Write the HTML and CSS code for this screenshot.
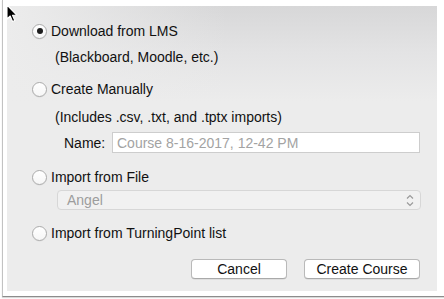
FILE: index.html
```html
<!DOCTYPE html>
<html>
<head>
<meta charset="utf-8">
<link rel="stylesheet" href="styles.css">
</head>
<body>
<div class="frame">
  <div class="panel">
    <div class="row">
      <span class="radio checked"></span>
      <span class="label">Download from LMS</span>
    </div>
    <div class="desc desc1">(Blackboard, Moodle, etc.)</div>
    <div class="row row2">
      <span class="radio"></span>
      <span class="label">Create Manually</span>
    </div>
    <div class="desc desc2">(Includes .csv, .txt, and .tptx imports)</div>
    <div class="name-row">
      <span class="name-label">Name:</span>
      <input class="name-input" type="text" placeholder="Course 8-16-2017, 12-42 PM">
    </div>
    <div class="row row3">
      <span class="radio"></span>
      <span class="label">Import from File</span>
    </div>
    <div class="select">
      <span class="select-text">Angel</span>
      <svg class="select-arrows" width="8" height="13" viewBox="0 0 8 13">
        <path d="M1 4.5 L4 1.5 L7 4.5" fill="none" stroke="#9a9a9a" stroke-width="1.2"/>
        <path d="M1 8.5 L4 11.5 L7 8.5" fill="none" stroke="#9a9a9a" stroke-width="1.2"/>
      </svg>
    </div>
    <div class="row row4">
      <span class="radio"></span>
      <span class="label">Import from TurningPoint list</span>
    </div>
    <div class="buttons">
      <button class="btn btn-cancel">Cancel</button>
      <button class="btn btn-create">Create Course</button>
    </div>
  </div>
</div>
<svg class="cursor" width="12" height="19" viewBox="0 0 12 19">
  <path d="M1 1 L1 15 L4.2 12 L6.6 17.6 L8.8 16.6 L6.5 11.2 L10.8 11.2 Z" fill="#000" stroke="#fff" stroke-width="1.1" stroke-linejoin="round"/>
</svg>
</body>
</html>
```
FILE: styles.css
```css
html, body {
  margin: 0;
  padding: 0;
  background: #ffffff;
}
body {
  width: 444px;
  height: 299px;
  overflow: hidden;
  position: relative;
  font-family: "Liberation Sans", Arial, sans-serif;
  font-size: 14px;
  color: #111;
}
.frame {
  margin-left: 2px;
  width: 438px;
  padding: 6px 4px 5px 4px;
  border-left: 1px solid #c2c2c2;
  border-right: 1px solid #b8b8b8;
  border-bottom: 1px solid #8c8c8c;
  background: #fff;
  box-shadow: 0 1px 1px rgba(0,0,0,0.15);
}
.panel {
  width: 430px;
  height: 285px;
  box-sizing: border-box;
  padding: 15px 17px 0 26px;
  background:
    linear-gradient(to right, #ececec 0, rgba(236,236,236,0) 220px),
    linear-gradient(to bottom, #d7d7d8 0, #e3e3e4 45px, #ececec 95px);
  display: flex;
  flex-direction: column;
}
.row {
  height: 20px;
  display: flex;
  align-items: center;
}
.row2 { margin-top: 12px; }
.row3 { margin-top: 14px; }
.row4 { margin-top: 13px; }
.radio {
  width: 15px;
  height: 15px;
  box-sizing: border-box;
  border-radius: 50%;
  border: 1px solid #ababab;
  background: linear-gradient(to bottom, #ffffff, #f6f6f6);
  box-shadow: 0 0.5px 0.5px rgba(0,0,0,0.08);
  margin-left: -1px;
  margin-right: 4px;
  display: flex;
  align-items: center;
  justify-content: center;
  flex: none;
}
.radio.checked::after {
  content: "";
  width: 6px;
  height: 6px;
  border-radius: 50%;
  background: #1e1e1e;
}
.label {
  line-height: 20px;
  color: #111;
}
.desc {
  height: 20px;
  line-height: 20px;
  padding-left: 22px;
  color: #111;
}
.desc1 { margin-top: 6px; }
.desc2 { margin-top: 8px; }
.name-row {
  margin-top: 5px;
  height: 21px;
  display: flex;
  align-items: center;
  padding-left: 31px;
}
.name-label {
  width: 48px;
  flex: none;
}
.name-input {
  width: 309px;
  height: 21px;
  box-sizing: border-box;
  border: 1px solid #cdcdcd;
  background: #fff;
  margin: 0;
  padding: 0 0 0 4px;
  font-family: "Liberation Sans", Arial, sans-serif;
  font-size: 14px;
  color: #111;
  outline: none;
}
.name-input::placeholder {
  color: #a3a3a3;
}
.select {
  margin-top: 3px;
  margin-left: 24px;
  width: 364px;
  height: 20px;
  box-sizing: border-box;
  border: 1px solid #d7d7d7;
  border-radius: 4px;
  background: #f1f1f1;
  display: flex;
  align-items: center;
  padding: 0 6px 0 9px;
}
.select-text {
  flex: 1;
  color: #9d9d9d;
}
.select-arrows {
  display: block;
}
.buttons {
  margin-top: 16px;
  display: flex;
  justify-content: flex-end;
  gap: 17px;
}
.btn {
  height: 20px;
  box-sizing: border-box;
  border: 1px solid #b9b9b9;
  border-bottom-color: #a9a9a9;
  border-radius: 4px;
  background: #ffffff;
  box-shadow: 0 0.5px 0.5px rgba(0,0,0,0.12);
  font-family: "Liberation Sans", Arial, sans-serif;
  font-size: 14px;
  color: #111;
  padding: 0;
  margin: 0;
  line-height: 18px;
}
.btn-cancel { width: 96px; }
.btn-create { width: 116px; }
.cursor {
  position: absolute;
  left: 6px;
  top: 4px;
}
```
